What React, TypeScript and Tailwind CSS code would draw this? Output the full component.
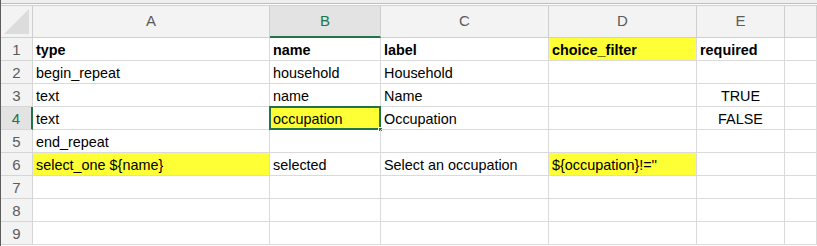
const cols = ["A", "B", "C", "D", "E", ""];

type Cell = { text?: string; bold?: boolean; fill?: boolean; center?: boolean; selected?: boolean };

const rows: Cell[][] = [
  [{ text: "type", bold: true }, { text: "name", bold: true }, { text: "label", bold: true }, { text: "choice_filter", bold: true, fill: true }, { text: "required", bold: true }, {}],
  [{ text: "begin_repeat" }, { text: "household" }, { text: "Household" }, {}, {}, {}],
  [{ text: "text" }, { text: "name" }, { text: "Name" }, {}, { text: "TRUE", center: true }, {}],
  [{ text: "text" }, { text: "occupation", fill: true, selected: true }, { text: "Occupation" }, {}, { text: "FALSE", center: true }, {}],
  [{ text: "end_repeat" }, {}, {}, {}, {}, {}],
  [{ text: "select_one ${name}", fill: true }, { text: "selected" }, { text: "Select an occupation" }, { text: "${occupation}!=''", fill: true }, {}, {}],
  [{}, {}, {}, {}, {}, {}],
  [{}, {}, {}, {}, {}, {}],
  [{}, {}, {}, {}, {}, {}],
];

export default function App() {
  return (
    <div className="w-[817px] h-[246px] overflow-hidden bg-white border-l border-[#5c5c5c] font-['Liberation_Sans',Arial,sans-serif]">
      {/* formula bar edge */}
      <div className="h-[3px] bg-[#efefef]" />
      <div className="h-px bg-[#bdbdbd]" />
      <div className="h-px bg-white" />
      <div className="h-px bg-[#d0d0d0]" />

      <div className="grid grid-cols-[32px_237px_111px_168px_148px_88px_1fr] grid-rows-[32px_repeat(9,23px)]">
        {/* corner */}
        <div className="relative bg-[#f3f3f3] border-r border-b border-[#cfcfcf] overflow-hidden">
          <svg className="absolute right-[3px] bottom-[3px]" width="25" height="25" viewBox="0 0 25 25">
            <polygon points="25,0 25,25 0,25" fill="#dcdcdc" />
          </svg>
        </div>
        {cols.map((c, i) => (
          <div
            key={c + i}
            className={
              i === 1
                ? "flex items-center justify-center bg-[#e3e3e3] border-r border-[#cfcfcf] border-b-2 border-b-[#227447] text-[#227447] text-[15px]"
                : "flex items-center justify-center bg-[#f3f3f3] border-r border-b border-[#cfcfcf] text-[#5b5b5b] text-[15px]"
            }
          >
            {c}
          </div>
        ))}

        {rows.map((row, r) => (
          <>
            <div
              key={"h" + r}
              className={
                r === 3
                  ? "flex items-center justify-center pt-[3px] bg-[#e3e3e3] border-r-2 border-r-[#227447] border-b border-b-[#d6d6d6] text-[#227447] text-[15px]"
                  : "flex items-center justify-center pt-[3px] bg-[#f3f3f3] border-r border-b border-[#d6d6d6] text-[#5b5b5b] text-[15px]"
              }
            >
              {r + 1}
            </div>
            {row.map((cell, c) => (
              <div
                key={r + "-" + c}
                className={
                  "relative flex items-center px-[3px] pt-[4px] text-[14.4px] text-black whitespace-nowrap border-r border-b border-[#dadada] " +
                  (cell.fill ? "bg-[#ffff36] " : "") +
                  (cell.bold ? "font-bold " : "") +
                  (cell.center ? "justify-center " : "")
                }
              >
                {cell.text}
                {cell.selected && (
                  <>
                    <div className="absolute -left-px -top-px -right-px -bottom-px border-2 border-[#227447]" />
                    <div className="absolute -right-[3px] -bottom-[3px] w-[5px] h-[5px] bg-[#227447] border border-white" />
                  </>
                )}
              </div>
            ))}
          </>
        ))}
      </div>
    </div>
  );
}
